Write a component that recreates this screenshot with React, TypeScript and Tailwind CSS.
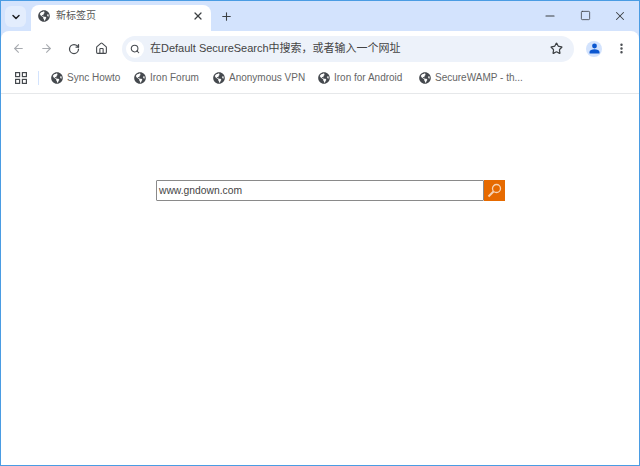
import { ArrowLeft, ArrowRight, ChevronDown, Home, Minus, MoreVertical, Plus, RotateCw, Search, Square, Star, X } from "lucide-react";
import { FaGlobeAmericas } from "react-icons/fa";

const bookmarks = [
  { label: "Sync Howto", width: "w-[83px]" },
  { label: "Iron Forum", width: "w-[79px]" },
  { label: "Anonymous VPN", width: "w-[105px]" },
  { label: "Iron for Android", width: "w-[101px]" },
  { label: "SecureWAMP - th...", width: "w-[110px]" },
];

function Globe() {
  return <FaGlobeAmericas size={12} className="shrink-0 text-[#45494e]" aria-hidden />;
}

export default function App() {
  return (
    <div className="flex h-[466px] w-[640px] flex-col overflow-hidden border border-[#4a9ce3] bg-[#d3e3fd] font-['Liberation_Sans','Noto_Sans_CJK_SC',sans-serif] text-[#3c4043]">
      <div className="flex h-[30px] items-start bg-[#d3e3fd] pt-[4px]">
        <div className="ml-[4px] mt-[1px] flex h-[21px] w-[21px] items-center justify-center rounded-md bg-[#e3edfd]">
          <ChevronDown size={12} strokeWidth={3} className="text-[#202124]" />
        </div>
        <div className="ml-[5px] flex h-[26px] w-[180px] items-center rounded-t-lg bg-white pb-[5px] pl-[7px] pr-[7px]">
          <Globe />
          <span className="ml-[6px] flex-1 text-[10px] text-[#555]">新标签页</span>
          <X size={12} strokeWidth={2.5} className="text-[#3c4043]" />
        </div>
        <div className="ml-[5px] mt-[1px] flex h-[21px] w-[21px] items-center justify-center">
          <Plus size={13} strokeWidth={2} className="text-[#3c4043]" />
        </div>
        <div className="ml-auto flex h-[21px] items-center text-[#3c4043]">
          <div className="flex w-[36px] justify-center"><Minus size={14} strokeWidth={1.75} /></div>
          <div className="flex w-[35px] justify-center"><Square size={11} strokeWidth={1.75} /></div>
          <div className="flex w-[36px] justify-center pr-[2px]"><X size={14} strokeWidth={1.75} /></div>
        </div>
      </div>

      <div className="flex flex-1 flex-col rounded-t-lg bg-white">
        <div className="flex h-[33px] items-center pl-[11px] pt-[2px]">
          <ArrowLeft size={13} strokeWidth={2} className="text-[#a8abb0]" />
          <ArrowRight size={13} strokeWidth={2} className="ml-[15px] text-[#a8abb0]" />
          <RotateCw size={12} strokeWidth={2.5} className="ml-[15px] text-[#45494e]" />
          <Home size={13} strokeWidth={2} className="ml-[15px] text-[#45494e]" />
          <div className="ml-[14px] flex h-[26px] w-[452px] items-center rounded-full bg-[#edf2fa] pl-[4px] pr-[11px]">
            <div className="flex h-[18px] w-[18px] items-center justify-center rounded-full bg-white">
              <Search size={10} strokeWidth={2.5} className="text-[#45494e]" />
            </div>
            <span className="ml-[6px] flex-1 text-[11px] text-[#444]">在Default SecureSearch中搜索，或者输入一个网址</span>
            <Star size={13} strokeWidth={2.25} className="text-[#3c4043]" />
          </div>
          <div className="ml-[12px] flex h-[16px] w-[16px] items-center justify-center rounded-full bg-[#d3e3fd]">
            <svg width="11" height="11" viewBox="0 0 11 11" fill="#0b57d0" aria-hidden>
              <circle cx="5.5" cy="3" r="2.4" />
              <path d="M0.5 10.5 V9 C0.5 7.2 3 6.2 5.5 6.2 C8 6.2 10.5 7.2 10.5 9 V10.5 Z" />
            </svg>
          </div>
          <MoreVertical size={13} strokeWidth={2.5} className="ml-[13px] text-[#45494e]" />
        </div>

        <div className="flex h-[30px] items-center border-b border-[#e6e8ea] pb-[2px] pl-[14px]">
          <svg width="12" height="12" viewBox="0 0 12 12" fill="none" stroke="#45494e" strokeWidth="1.2" aria-hidden>
            <rect x="0.6" y="0.6" width="4" height="4" />
            <rect x="7.4" y="0.6" width="4" height="4" />
            <rect x="0.6" y="7.4" width="4" height="4" />
            <rect x="7.4" y="7.4" width="4" height="4" />
          </svg>
          <div className="ml-[11px] mr-[12px] h-[14px] w-px bg-[#d3e3fd]" />
          {bookmarks.map((b) => (
            <div key={b.label} className={`flex items-center gap-[4px] ${b.width}`}>
              <Globe />
              <span className="whitespace-nowrap text-[10px] text-[#666]">{b.label}</span>
            </div>
          ))}
        </div>

        <div className="flex flex-1 justify-center pl-[21px] pt-[86px]">
          <div className="flex h-[21px]">
            <div className="flex h-[21px] w-[328px] items-center rounded-[1px] border border-[#8a8a8a] pl-[2px] text-[10.3px] text-[#444]">www.gndown.com</div>
            <div className="flex h-[21px] w-[21px] items-center justify-center bg-[#e66a00]">
              <svg width="15" height="15" viewBox="0 0 15 15" fill="none" stroke="#f6d3b4" aria-hidden>
                <circle cx="9.5" cy="5.5" r="4" strokeWidth="1.3" />
                <path d="M6.5 8.5 L1.5 13.5" strokeWidth="2" />
              </svg>
            </div>
          </div>
        </div>
      </div>
    </div>
  );
}
